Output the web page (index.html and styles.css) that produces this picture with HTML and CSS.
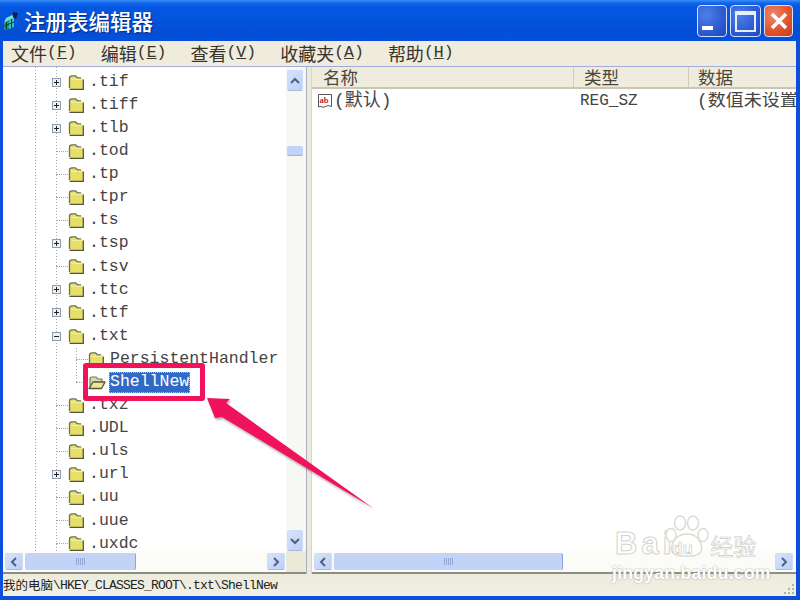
FILE: index.html
```html
<!DOCTYPE html>
<html lang="zh-CN">
<head>
<meta charset="utf-8">
<title>注册表编辑器</title>
<link rel="stylesheet" href="styles.css">
</head>
<body>
<svg class="defs" width="0" height="0" aria-hidden="true">
  <symbol id="folder" viewBox="0 0 16 15">
    <path d="M2 14V3Q2 1 4 1H7.500L9.500 3H13Q15 3 15 5V14Z" fill="#e6df68"/>
    <path d="M1.500 13V3Q1.500 .8 4 .8H7.500L9.500 2.800H13" fill="none" stroke="#6e6e50" stroke-width="1.300"/>
    <path d="M3 4.300H14" stroke="#f6f3b4" stroke-width="1"/>
    <path d="M1.500 14.300H15.300V4.500" fill="none" stroke="#55553e" stroke-width="1.300"/>
  </symbol>
  <symbol id="folder-open" viewBox="0 0 18 15">
    <path d="M2 13V4Q2 2 4 2H8L10 4H14V7" fill="#d8d8b0" stroke="#77775a" stroke-width="1.200"/>
    <path d="M1 13.500L5 7H17L13.500 13.500Z" fill="#efe88c" stroke="#55553e" stroke-width="1.300" stroke-linejoin="round"/>
  </symbol>
  <symbol id="plus" viewBox="0 0 9 9">
    <rect x=".5" y=".5" width="8" height="8" fill="#f1f1ea" stroke="#8f9db2"/>
    <path d="M2 4.500H7M4.500 2V7" stroke="#222" stroke-width="1"/>
  </symbol>
  <symbol id="minus" viewBox="0 0 9 9">
    <rect x=".5" y=".5" width="8" height="8" fill="#f1f1ea" stroke="#8f9db2"/>
    <path d="M2 4.500H7" stroke="#222" stroke-width="1"/>
  </symbol>
  <symbol id="chev-up" viewBox="0 0 10 8"><path d="M1 6L5 2L9 6" fill="none" stroke="#4d6185" stroke-width="2"/></symbol>
  <symbol id="chev-down" viewBox="0 0 10 8"><path d="M1 2L5 6L9 2" fill="none" stroke="#4d6185" stroke-width="2"/></symbol>
  <symbol id="chev-left" viewBox="0 0 8 10"><path d="M6 1L2 5L6 9" fill="none" stroke="#4d6185" stroke-width="2"/></symbol>
  <symbol id="chev-right" viewBox="0 0 8 10"><path d="M2 1L6 5L2 9" fill="none" stroke="#4d6185" stroke-width="2"/></symbol>
</svg>

<div class="window">
  <header class="titlebar">
    <svg class="app-icon" width="16" height="20" viewBox="0 0 16 20">
      <path d="M1 12L6 9V18L1 19Z" fill="#1e8f86"/>
      <path d="M6 9L11 7V16L6 18Z" fill="#35c8ae"/>
      <path d="M3 7L9 4L11 7L6 9L1 12Z" fill="#6fe0cc"/>
      <path d="M10 1L15 2L13 8L10 6Z" fill="#17202a"/>
      <path d="M3.500 11V18M1 15L11 11M8.500 8V17" stroke="#0b3a40" stroke-width="1"/>
    </svg>
    <h1 class="title">注册表编辑器</h1>
    <div class="controls">
      <div class="ctl ctl-blue ctl-min-wrap"><span class="ctl-min"></span></div>
      <div class="ctl ctl-blue ctl-max-wrap"><span class="ctl-max"></span></div>
      <div class="ctl ctl-close">
        <svg width="20" height="20" viewBox="0 0 20 20"><path d="M3 3L17 17M17 3L3 17" stroke="#fff" stroke-width="3.600"/></svg>
      </div>
    </div>
  </header>

  <div class="client">
    <nav class="menubar">
      <span class="menu">文件<span class="mono">(<u>F</u>)</span></span>
      <span class="menu">编辑<span class="mono">(<u>E</u>)</span></span>
      <span class="menu">查看<span class="mono">(<u>V</u>)</span></span>
      <span class="menu">收藏夹<span class="mono">(<u>A</u>)</span></span>
      <span class="menu">帮助<span class="mono">(<u>H</u>)</span></span>
    </nav>

    <main class="panes">
      <section class="tree-pane">
        <div class="tree">
          <div class="row"><svg class="exp"><use href="#plus"/></svg><svg class="fld"><use href="#folder"/></svg><span class="name">.tif</span></div>
          <div class="row"><svg class="exp"><use href="#plus"/></svg><svg class="fld"><use href="#folder"/></svg><span class="name">.tiff</span></div>
          <div class="row"><svg class="exp"><use href="#plus"/></svg><svg class="fld"><use href="#folder"/></svg><span class="name">.tlb</span></div>
          <div class="row"><i class="tick"></i><svg class="fld"><use href="#folder"/></svg><span class="name">.tod</span></div>
          <div class="row"><i class="tick"></i><svg class="fld"><use href="#folder"/></svg><span class="name">.tp</span></div>
          <div class="row"><i class="tick"></i><svg class="fld"><use href="#folder"/></svg><span class="name">.tpr</span></div>
          <div class="row"><i class="tick"></i><svg class="fld"><use href="#folder"/></svg><span class="name">.ts</span></div>
          <div class="row"><svg class="exp"><use href="#plus"/></svg><svg class="fld"><use href="#folder"/></svg><span class="name">.tsp</span></div>
          <div class="row"><i class="tick"></i><svg class="fld"><use href="#folder"/></svg><span class="name">.tsv</span></div>
          <div class="row"><svg class="exp"><use href="#plus"/></svg><svg class="fld"><use href="#folder"/></svg><span class="name">.ttc</span></div>
          <div class="row"><svg class="exp"><use href="#plus"/></svg><svg class="fld"><use href="#folder"/></svg><span class="name">.ttf</span></div>
          <div class="row"><svg class="exp"><use href="#minus"/></svg><svg class="fld"><use href="#folder"/></svg><span class="name">.txt</span></div>
          <div class="children">
            <div class="row child"><i class="tick"></i><svg class="fld"><use href="#folder"/></svg><span class="name">PersistentHandler</span></div>
            <div class="row child"><i class="tick"></i><svg class="fld-open"><use href="#folder-open"/></svg><span class="name selected">ShellNew</span></div>
          </div>
          <div class="row"><i class="tick"></i><svg class="fld"><use href="#folder"/></svg><span class="name">.txz</span></div>
          <div class="row"><i class="tick"></i><svg class="fld"><use href="#folder"/></svg><span class="name">.UDL</span></div>
          <div class="row"><i class="tick"></i><svg class="fld"><use href="#folder"/></svg><span class="name">.uls</span></div>
          <div class="row"><svg class="exp"><use href="#plus"/></svg><svg class="fld"><use href="#folder"/></svg><span class="name">.url</span></div>
          <div class="row"><i class="tick"></i><svg class="fld"><use href="#folder"/></svg><span class="name">.uu</span></div>
          <div class="row"><i class="tick"></i><svg class="fld"><use href="#folder"/></svg><span class="name">.uue</span></div>
          <div class="row"><i class="tick"></i><svg class="fld"><use href="#folder"/></svg><span class="name">.uxdc</span></div>
        </div>
        <div class="vscroll">
          <div class="sbtn sbtn-v"><svg width="10" height="8"><use href="#chev-up"/></svg></div>
          <div class="vtrack"><div class="vthumb"></div></div>
          <div class="sbtn sbtn-v"><svg width="10" height="8"><use href="#chev-down"/></svg></div>
        </div>
        <div class="hscroll">
          <div class="sbtn sbtn-h"><svg width="8" height="10"><use href="#chev-left"/></svg></div>
          <div class="htrack"><div class="hthumb tree-thumb"><span class="grip"></span></div></div>
          <div class="sbtn sbtn-h"><svg width="8" height="10"><use href="#chev-right"/></svg></div>
        </div>
        <div class="corner"></div>
      </section>

      <div class="splitter"></div>

      <section class="list-pane">
        <div class="list-head">
          <div class="col col-name">名称</div>
          <div class="col col-type">类型</div>
          <div class="col col-data">数据</div>
        </div>
        <div class="list-body">
          <div class="list-row">
            <div class="cell cell-name">
              <svg class="ab-icon" width="16" height="16" viewBox="0 0 16 16">
                <path d="M1.500 1.500H14.500V13.500L11 12.500Q7 15.500 3 13.500L1.500 14Z" fill="#fff" stroke="#555" stroke-width="1"/>
                <text class="ab-text" x="2.500" y="9.500">ab</text>
              </svg>
              <span>(默认)</span>
            </div>
            <div class="cell cell-type">REG_SZ</div>
            <div class="cell cell-data">(数值未设置)</div>
          </div>
        </div>
        <div class="hscroll list-hscroll">
          <div class="sbtn sbtn-h"><svg width="8" height="10"><use href="#chev-left"/></svg></div>
          <div class="htrack"><div class="hthumb list-thumb"><span class="grip"></span></div></div>
          <div class="sbtn sbtn-h"><svg width="8" height="10"><use href="#chev-right"/></svg></div>
        </div>
      </section>
    </main>

    <footer class="statusbar">
      <span class="st-cjk">我的电脑</span><span class="st-path">\HKEY_CLASSES_ROOT\.txt\ShellNew</span>
      <svg class="grip-corner" width="14" height="14" viewBox="0 0 14 14"><path d="M10 2h2v2h-2zM6 6h2v2H6zM10 6h2v2h-2zM2 10h2v2H2zM6 10h2v2H6zM10 10h2v2h-2z" fill="#b5b29f"/></svg>
    </footer>
  </div>

  <div class="mark-box"></div>
  <svg class="mark-arrow" width="190" height="130" viewBox="200 390 190 130">
    <path d="M207 398L230 399L226 403L373 508L222 417L215 418Z" fill="#f0125a"/>
  </svg>

  <div class="watermark">
    <div class="wm-logo">
      <span class="wm-bai">Bai</span>
      <svg class="wm-paw" width="46" height="44" viewBox="0 0 46 44">
        <g fill="#fff" stroke="#dcdcd6" stroke-width="1.500">
          <ellipse cx="7" cy="20" rx="5" ry="6.500"/>
          <ellipse cx="16" cy="8" rx="5.500" ry="7"/>
          <ellipse cx="29" cy="8" rx="5.500" ry="7"/>
          <ellipse cx="39" cy="20" rx="5" ry="6.500"/>
          <path d="M7 34Q10 19 23 19Q36 19 38 34Q36 42 23 41Q9 42 7 34Z"/>
        </g>
      </svg>
      <span class="wm-du">du</span>
      <span class="wm-jy">经验</span>
    </div>
    <div class="wm-url">jingyan.baidu.com</div>
  </div>
</div>
</body>
</html>
```
FILE: styles.css
```css
* { box-sizing: border-box; }
html, body { margin: 0; padding: 0; }
body { width: 800px; height: 600px; overflow: hidden; font-family: "Noto Sans CJK SC", sans-serif; }
.defs { display: block; height: 0; }
.mono { font-family: "Liberation Mono", monospace; }

.window {
  position: relative;
  width: 800px; height: 600px;
  display: flex; flex-direction: column;
  background: #0c4fdc;
  overflow: hidden;
}

.titlebar {
  height: 41px; flex: none;
  display: flex; align-items: center;
  padding: 1px 7px 0 3px;
  background: linear-gradient(#3c8ff2 0, #0f66ee 3px, #0556e2 7px, #0353dc 20px, #034ed4 32px, #0450de 41px);
}
.app-icon { margin-right: 5px; flex: none; }
.title {
  margin: 0; flex: 1;
  font-size: 21.5px; font-weight: 500; line-height: 1;
  color: #fff; text-shadow: 1px 1px 1px #0a2a80;
}
.controls { display: flex; gap: 3px; }
.ctl {
  height: 32px;
  display: flex; align-items: center; justify-content: center;
  border: 1px solid #d6e2fb; border-radius: 4px;
}
.ctl-blue { background: radial-gradient(circle at 30% 30%, #4d7fe8, #2a58cf 65%, #1f49bd); }
.ctl-min-wrap { width: 30px; }
.ctl-max-wrap { width: 31px; }
.ctl-close { width: 29px; background: radial-gradient(circle at 30% 30%, #f0876a, #e0512a 60%, #c93d18); }
.ctl-min { width: 11px; height: 4px; background: #fff; align-self: flex-end; margin: 0 9px 6px 0; }
.ctl-max { width: 21px; height: 21px; border: 2px solid #e6eefc; border-top-width: 4px; }

.client {
  flex: 1; min-height: 0;
  margin: 0 4px 4px 3px;
  display: flex; flex-direction: column;
  background: #ece9d8;
}

.menubar {
  height: 26px; flex: none;
  display: flex; align-items: center; gap: 24px;
  padding: 0 0 1px 8px;
  font-size: 18px; line-height: 1; color: #38342c;
  background: #efecdd;
  border-bottom: 1px solid #a4abd6;
}
.menu { white-space: nowrap; display: flex; align-items: center; }
.menu .mono { font-size: 16.5px; }

.panes {
  flex: 1; min-height: 0;
  display: grid; grid-template-columns: 303px 6px 1fr;
}

.tree-pane {
  min-height: 0;
  display: grid;
  grid-template-columns: minmax(0, 1fr) 20px;
  grid-template-rows: minmax(0, 1fr) 21px;
  background: #fff;
  border-bottom: 2px solid #8d8d88;
}
.tree {
  overflow: hidden;
  padding-top: 3.5px;
  background-color: #fff;
  background-image:
    repeating-linear-gradient(#a8a8a8 0 1px, transparent 1px 3px),
    repeating-linear-gradient(#a8a8a8 0 1px, transparent 1px 3px);
  background-size: 1px 100%, 1px 100%;
  background-position: 32px 0, 53px 0;
  background-repeat: no-repeat;
}
.row {
  height: 23.1px;
  display: flex; align-items: center;
  padding-left: 49px;
  font: 16.5px/1 "Liberation Mono", monospace;
  color: #444;
  white-space: nowrap;
}
.exp { width: 9px; height: 9px; flex: none; margin-right: 7px; }
.tick {
  display: block; flex: none;
  width: 12px; margin-left: 4px;
  border-top: 1px dotted #a8a8a8;
}
.fld { width: 16px; height: 15px; flex: none; margin-right: 4px; background: #fff; }
.fld-open { width: 18px; height: 15px; flex: none; margin-right: 3px; }
.name { display: block; padding: 2px 1px; }
.children {
  background-image: repeating-linear-gradient(#a8a8a8 0 1px, transparent 1px 3px);
  background-size: 1px 35px;
  background-position: 73px 0;
  background-repeat: no-repeat;
}
.child { padding-left: 69px; }
.child .fld { margin-right: 5px; }
.selected {
  background: #316ac5; color: #fff;
  outline: 1px dotted #a8c0e8; outline-offset: -1px;
}

.vscroll {
  min-height: 0;
  display: flex; flex-direction: column;
  background: #f7f8f3;
  padding: 3px 2px 0 0;
}
.vtrack { flex: 1; padding-top: 55px; }
.vthumb { height: 10px; margin: 0 1px; background: #c3d3f6; border-radius: 2px; border-bottom: 1px solid #9fb2dc; }
.sbtn {
  display: flex; align-items: center; justify-content: center;
  flex: none;
  background: linear-gradient(135deg, #d8e3fb, #bccff6);
  border-radius: 2px;
  border: 1px solid #cfdcf6;
  border-bottom-color: #a9badf;
}
.sbtn-v { height: 21px; margin: 0 1px; }
.sbtn-h { width: 18px; margin: 2px 1px; }

.hscroll { display: flex; background: #fbfbf7; padding-left: 1px; }
.htrack { flex: 1; display: flex; padding: 2px 1px; }
.hthumb {
  display: flex; align-items: center; justify-content: center;
  background: #c3d3f6; border-radius: 2px;
  border-right: 1px solid #8ea3cf;
}
.tree-thumb { width: 111px; }
.list-thumb { width: 229px; }
.grip { width: 9px; height: 7px; background: repeating-linear-gradient(90deg, #92a9d6 0 1px, transparent 1px 2px); }
.corner { background: #ece9d8; }

.splitter { background: #ece9d8; border-left: 1px solid #a9afc4; border-right: 1px solid #d3d6df; }

.list-pane {
  min-height: 0; min-width: 0;
  display: flex; flex-direction: column;
  background: #fff;
  border-bottom: 2px solid #8d8d88;
}
.list-head {
  height: 22px; flex: none;
  display: flex; align-items: center;
  background: #efecdd;
  border-bottom: 2px solid #c9c6b4;
  font-size: 17.5px; line-height: 1; color: #4a463c;
}
.col { height: 20px; display: flex; align-items: center; }
.col-name { width: 261px; padding-left: 11px; }
.col-type { width: 115px; padding-left: 10px; border-left: 1px solid #cfccbb; }
.col-data { flex: 1; padding-left: 9px; border-left: 1px solid #cfccbb; }
.list-body { flex: 1; min-height: 0; overflow: hidden; }
.list-row {
  display: flex; height: 22px; align-items: center;
  padding-top: 1px;
  font: 18px/1 "Liberation Mono", "Noto Sans CJK SC", monospace;
  color: #444; white-space: nowrap;
}
.cell { flex: none; }
.cell-name { width: 268px; padding-left: 5px; display: flex; align-items: center; gap: 1px; }
.ab-text { font: 700 8.5px "Liberation Serif", serif; fill: #c9202c; }
.cell-type { width: 117px; font-size: 16px; }
.cell-data { width: 99px; overflow: hidden; }
.list-hscroll { height: 21px; flex: none; padding-right: 2px; }
.statusbar {
  height: 22px; flex: none;
  display: flex; align-items: center;
  background: linear-gradient(#ecebdc, #f2f0e2);
  color: #222;
  white-space: nowrap;
}
.st-cjk { font-size: 12.5px; line-height: 1; }
.st-path { font: 13px/1 "Liberation Mono", monospace; letter-spacing: -.8px; flex: 1; }
.grip-corner { align-self: flex-end; flex: none; }

/* Annotations drawn over the screenshot */
.mark-box {
  position: absolute; left: 83px; top: 363px;
  width: 122px; height: 38px;
  border: 5px solid #f0125a; border-radius: 3px;
}
.mark-arrow {
  position: absolute; left: 200px; top: 390px;
  filter: drop-shadow(1px 2px 1px rgba(90, 60, 70, .45));
}

.watermark {
  position: absolute; left: 612px; top: 515px;
  width: 146px;
}
.wm-logo { display: flex; align-items: flex-end; height: 44px; position: relative; }
.wm-bai {
  font: 700 31px/1 "Liberation Sans", sans-serif;
  color: #fff;
  -webkit-text-stroke: 1px #d4d4ce;
  margin: 0 0 0 3px;
  letter-spacing: 4px;
}
.wm-paw { margin-left: -11px; flex: none; }
.wm-du {
  position: absolute; left: 60px; top: 25px;
  font: 700 17px/1 "Liberation Sans", sans-serif;
  color: #fff; -webkit-text-stroke: .6px #c4c4be;
}
.wm-jy {
  font-size: 23px; line-height: 1; margin: 0 0 2px 0;
  color: #fff; -webkit-text-stroke: .6px #c8c8c2;
  white-space: nowrap;
}
.wm-url {
  font: 700 17.5px/1 "Liberation Sans", sans-serif;
  color: #fff; text-shadow: 0 0 2px #999;
  white-space: nowrap; margin-top: 6px; letter-spacing: .3px;
}
```
